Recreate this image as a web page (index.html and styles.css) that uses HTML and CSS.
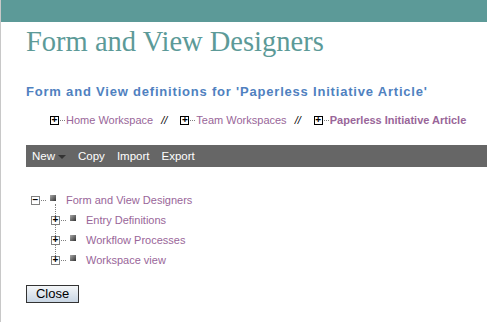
FILE: index.html
```html
<!DOCTYPE html>
<html lang="en">
<head>
    <meta charset="UTF-8">
    <title>Form and View Designers</title>
    <link rel="stylesheet" href="styles.css">
</head>
<body>
    <div class="topbar"></div>
    <div class="page">
        <h1 class="title">Form and View Designers</h1>
        <h2 class="subtitle">Form and View definitions for 'Paperless Initiative Article'</h2>
        <div class="crumbs">
            <span class="crumb"><span class="box">+</span><span class="dots"></span><a href="#">Home Workspace</a></span>
            <span class="sep">//</span>
            <span class="crumb"><span class="box">+</span><span class="dots"></span><a href="#">Team Workspaces</a></span>
            <span class="sep">//</span>
            <span class="crumb current"><span class="box">+</span><span class="dots"></span><a href="#">Paperless Initiative Article</a></span>
        </div>
        <div class="toolbar">
            <span class="tool">New<span class="caret"></span></span>
            <span class="tool">Copy</span>
            <span class="tool">Import</span>
            <span class="tool">Export</span>
        </div>
        <ul class="tree">
            <li class="node root">
                <div class="row"><span class="box grey">&minus;</span><span class="dots"></span><span class="bullet"></span><a href="#">Form and View Designers</a></div>
                <ul class="children">
                    <li class="node"><div class="row"><span class="box grey">+</span><span class="dots"></span><span class="bullet"></span><a href="#">Entry Definitions</a></div></li>
                    <li class="node"><div class="row"><span class="box grey">+</span><span class="dots"></span><span class="bullet"></span><a href="#">Workflow Processes</a></div></li>
                    <li class="node last"><div class="row"><span class="box grey">+</span><span class="dots"></span><span class="bullet"></span><a href="#">Workspace view</a></div></li>
                </ul>
            </li>
        </ul>
        <button class="close">Close</button>
    </div>
</body>
</html>
```

FILE: styles.css
```css
*{
    box-sizing: border-box;
    margin: 0px;
    padding: 0px;
}

body{
    font-family: "Liberation Sans", Arial, sans-serif;
    font-size: 11px;
    background-color: white;
    border-left: 1px solid #c8c8c8;
    height: 100vh;
}

a{
    color: #996699;
    text-decoration: none;
}

.topbar{
    height: 22px;
    background-color: #5c9a98;
}

.page{
    padding-left: 25px;
}

.title{
    font-family: "Liberation Serif", "Times New Roman", serif;
    font-weight: normal;
    font-size: 28.5px;
    color: #5c9a98;
    line-height: 34px;
    margin-top: 3px;
    white-space: nowrap;
}

.subtitle{
    font-size: 13px;
    font-weight: bold;
    color: #4f81c0;
    letter-spacing: 0.8px;
    margin-top: 25px;
    line-height: 16px;
    white-space: nowrap;
}

.crumbs{
    display: flex;
    align-items: center;
    margin-top: 13px;
    padding-left: 24px;
    height: 14px;
    white-space: nowrap;
}

.crumb{
    display: flex;
    align-items: center;
    font-size: 11px;
}

.crumb.current a{
    font-weight: bold;
}

.sep{
    font-style: italic;
    font-size: 11px;
    margin: 0px 13px 0px 8px;
}

.box{
    display: inline-flex;
    align-items: center;
    justify-content: center;
    width: 9px;
    height: 9px;
    border: 1px solid black;
    font-size: 10px;
    font-weight: bold;
    line-height: 1;
    color: black;
    background: white;
}

.box.grey{
    border-color: #808080;
}

.dots{
    display: inline-block;
    width: 5px;
    border-top: 1px dotted #808080;
    margin: 0px 1px 0px 1px;
}

.toolbar{
    display: flex;
    align-items: center;
    gap: 12px;
    height: 22px;
    margin-top: 18px;
    padding-left: 6px;
    background-color: #666666;
    color: white;
    font-size: 11.5px;
}

.caret{
    display: inline-block;
    width: 0px;
    height: 0px;
    margin-left: 3px;
    vertical-align: middle;
    border-left: 4px solid transparent;
    border-right: 4px solid transparent;
    border-top: 4px solid #333;
}

.tree{
    list-style: none;
    margin-top: 23px;
    padding-left: 5px;
    color: #996699;
}

.tree ul{
    list-style: none;
}

.row{
    display: flex;
    align-items: center;
    height: 20px;
}

.row .dots{
    margin-right: 4px;
}

.bullet{
    display: inline-block;
    width: 6px;
    height: 6px;
    background: linear-gradient(135deg, #aaa, #333);
    margin-right: 10px;
    position: relative;
    top: -2px;
}

.children{
    padding-left: 20px;
}

.children .node{
    position: relative;
}

.children .node::before{
    content: "";
    position: absolute;
    left: 4px;
    top: -6px;
    height: 12px;
    border-left: 1px dotted #808080;
}

.close{
    margin-top: 15px;
    width: 53px;
    height: 18px;
    font-family: "Liberation Sans", Arial, sans-serif;
    font-size: 13px;
    line-height: 14px;
    color: black;
    border: 1px solid #333;
    background: linear-gradient(#f4f6f8, #c9d6e4);
}
```
